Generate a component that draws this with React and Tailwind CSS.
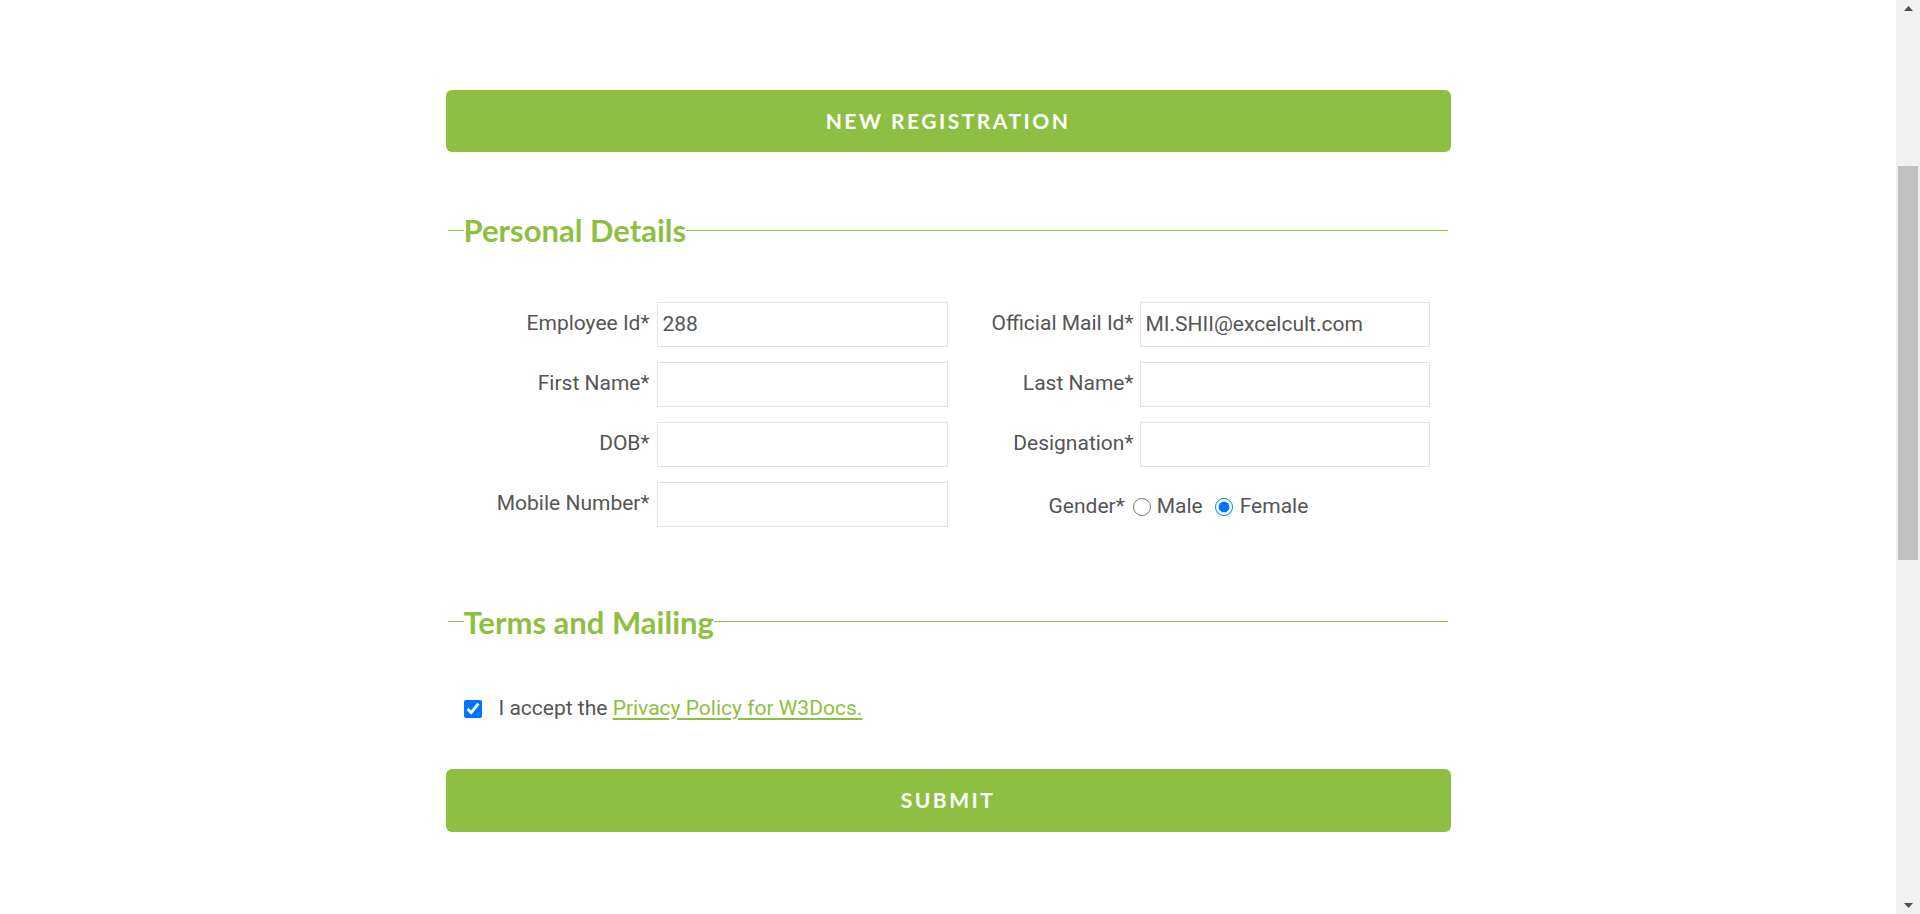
import { useState } from "react";

const Field = ({ label, value, pad = "pr-[7px]" }) => (
  <>
    <label className={`flex items-center justify-end h-[45px] text-[21px] text-[#555] whitespace-nowrap ${pad}`}>
      {label}
    </label>
    <input
      className="h-[45px] w-full border border-[#e3e3e3] px-[5px] text-[21px] text-[#555] outline-none"
      defaultValue={value}
    />
  </>
);

const Scrollbar = () => (
  <aside className="w-[24px] h-screen bg-[#f1f1f1] flex flex-col shrink-0">
    <div className="h-[17px] flex items-center justify-center">
      <svg width="9" height="5" viewBox="0 0 9 5">
        <path d="M0 5 L4.5 0 L9 5 Z" fill="#505050" />
      </svg>
    </div>
    <div className="mt-[149px] mx-[2px] h-[394px] bg-[#c1c1c1]" />
    <div className="flex-1" />
    <div className="h-[17px] flex items-center justify-center">
      <svg width="9" height="5" viewBox="0 0 9 5">
        <path d="M0 0 L9 0 L4.5 5 Z" fill="#505050" />
      </svg>
    </div>
  </aside>
);

const App = () => {
  const [gender, setGender] = useState("female");
  const [accepted, setAccepted] = useState(true);

  return (
    <div className="flex h-screen overflow-hidden bg-white" style={{ fontFamily: "Roboto, 'Liberation Sans', sans-serif" }}>
      <main className="flex-1">
        <div className="w-[1005px] mx-auto pt-[90px]">
          {/* Header button */}
          <button className="w-full h-[62px] rounded-[6px] bg-[#8ebf42] text-white font-bold uppercase text-[21px] tracking-[2.5px] font-['Lato',sans-serif]">
            New Registration
          </button>

          {/* Personal details */}
          <fieldset className="mt-[55px] ml-[2px] mr-[3px] border-0 border-t border-[#8ebf42]">
            <legend className="ml-[16px] px-0 font-['Lato',sans-serif] font-bold text-[31px] text-[#8ebf42]">
              Personal Details
            </legend>
            <div className="mt-[48px] grid grid-cols-[209px_291px_192px_290px] gap-y-[15px]">
              <Field label="Employee Id*" value="288" />
              <Field label="Official Mail Id*" value="MI.SHII@excelcult.com" pad="pr-[6px]" />
              <Field label="First Name*" />
              <Field label="Last Name*" pad="pr-[6px]" />
              <Field label="DOB*" />
              <Field label="Designation*" pad="pr-[6px]" />
              <Field label="Mobile Number*" />
              <div className="col-span-2 flex items-center h-[45px] pt-[5px] pl-[101px] text-[21px] text-[#555]">
                <span>Gender*</span>
                <input
                  type="radio"
                  name="gender"
                  checked={gender === "male"}
                  onChange={() => setGender("male")}
                  className="ml-[8px] w-[18px] h-[18px] m-0"
                />
                <span className="ml-[6px]">Male</span>
                <input
                  type="radio"
                  name="gender"
                  checked={gender === "female"}
                  onChange={() => setGender("female")}
                  className="ml-[12px] w-[18px] h-[18px] m-0"
                />
                <span className="ml-[7px]">Female</span>
              </div>
            </div>
          </fieldset>

          {/* Terms */}
          <fieldset className="mt-[72px] ml-[2px] mr-[3px] border-0 border-t border-[#8ebf42]">
            <legend className="ml-[16px] px-0 font-['Lato',sans-serif] font-bold text-[31px] text-[#8ebf42]">
              Terms and Mailing
            </legend>
            <div className="mt-[48px] pl-[16px] flex items-center text-[21px] text-[#555]">
              <input
                type="checkbox"
                checked={accepted}
                onChange={() => setAccepted(!accepted)}
                className="w-[18px] h-[18px] m-0"
              />
              <span className="ml-[17px]">
                I accept the{" "}
                <a href="#" className="text-[#8ebf42] underline underline-offset-[3px]">
                  Privacy Policy for W3Docs.
                </a>
              </span>
            </div>
          </fieldset>

          <button className="mt-[44px] w-full h-[63px] rounded-[6px] bg-[#8ebf42] text-white font-bold uppercase text-[21px] tracking-[2.5px] font-['Lato',sans-serif]">
            Submit
          </button>
        </div>
      </main>
      <Scrollbar />
    </div>
  );
};

export default App;
